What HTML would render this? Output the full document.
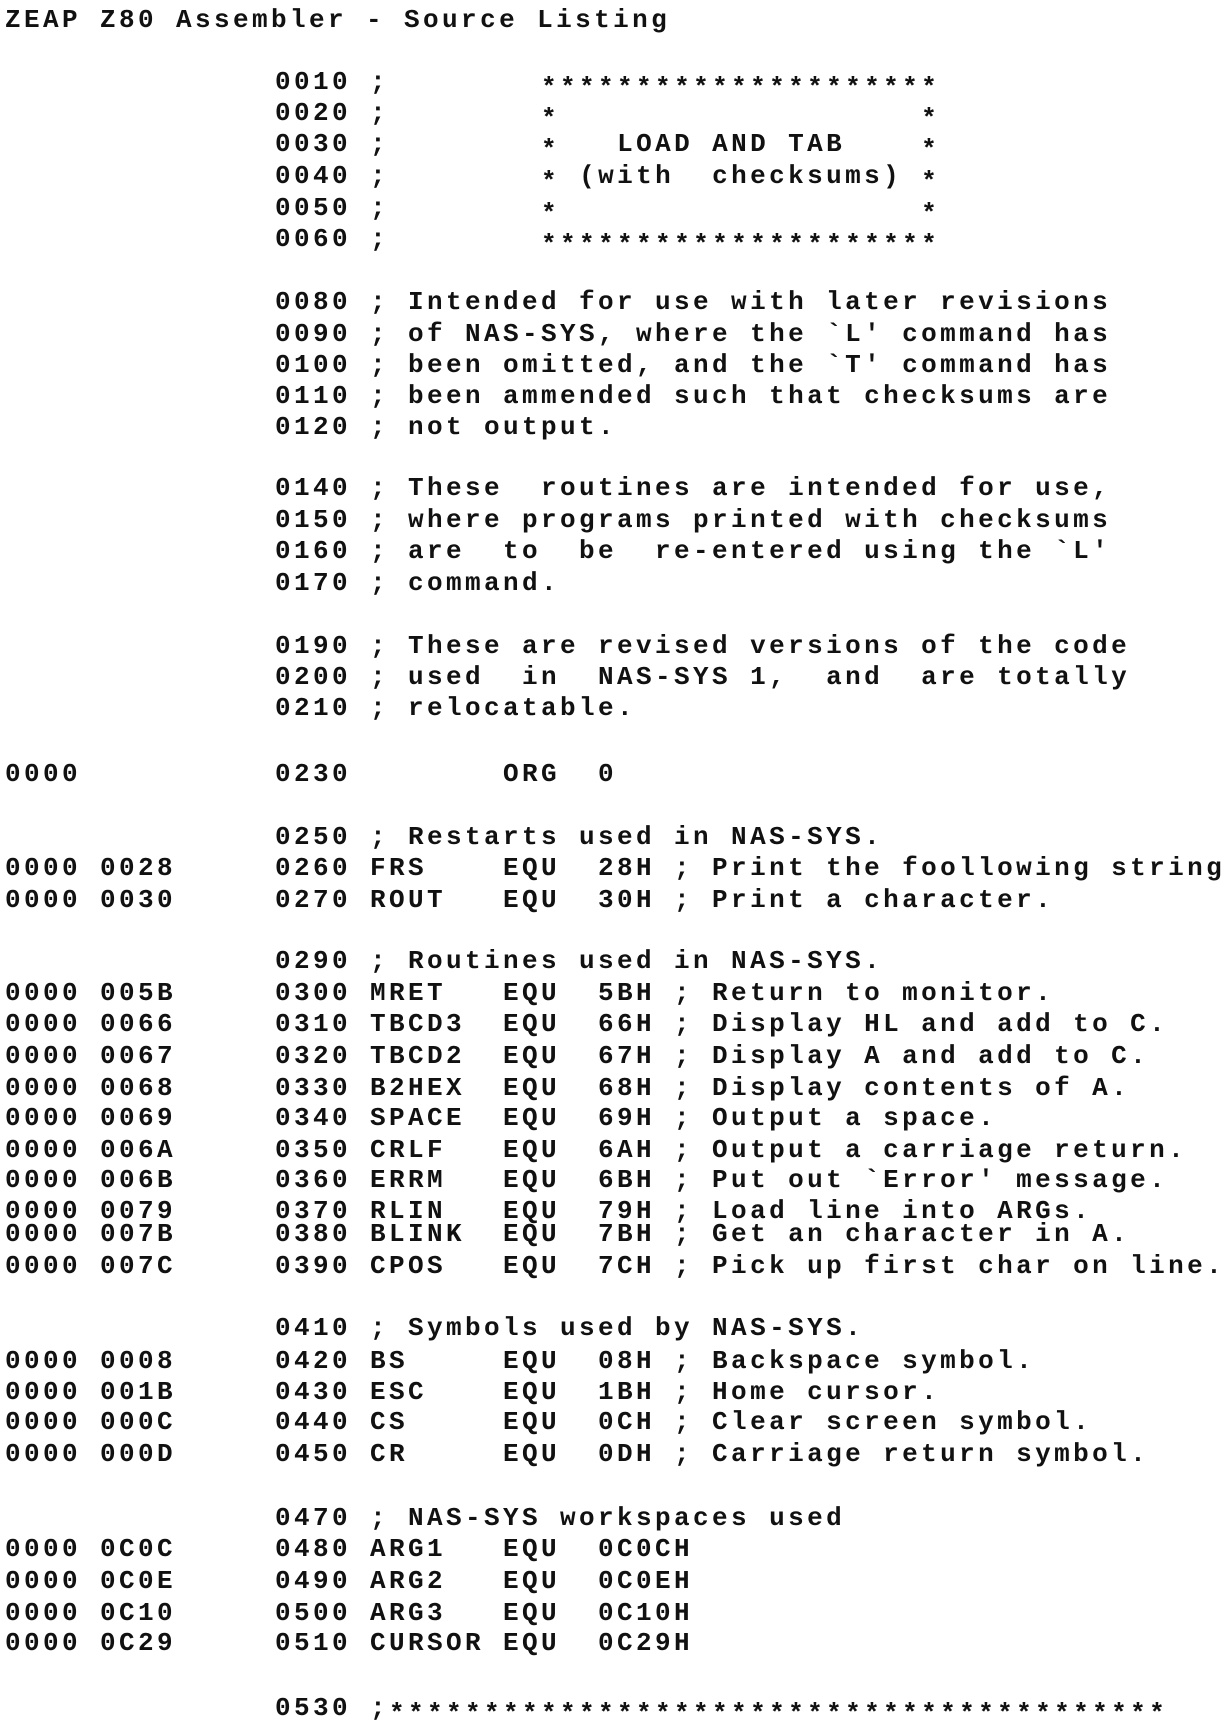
<!DOCTYPE html>
<html><head><meta charset="utf-8"><style>
html,body{margin:0;padding:0;background:#fff;}
body{width:1231px;height:1731px;position:relative;overflow:hidden;}
.l{position:absolute;white-space:pre;font-family:"Liberation Mono",monospace;font-size:26px;letter-spacing:3.4px;line-height:30px;color:#111;font-weight:bold;}
.a{left:5px}.m{left:275px}
.s{position:relative;top:6px}
</style></head><body>
<div class="l a" style="top:5px">ZEAP Z80 Assembler - Source Listing</div>
<div class="l m" style="top:67px">0010 ;        <span class="s">*********************</span></div>
<div class="l m" style="top:98px">0020 ;        <span class="s">*</span>                   <span class="s">*</span></div>
<div class="l m" style="top:129px">0030 ;        <span class="s">*</span>   LOAD AND TAB    <span class="s">*</span></div>
<div class="l m" style="top:161px">0040 ;        <span class="s">*</span> (with  checksums) <span class="s">*</span></div>
<div class="l m" style="top:193px">0050 ;        <span class="s">*</span>                   <span class="s">*</span></div>
<div class="l m" style="top:224px">0060 ;        <span class="s">*********************</span></div>
<div class="l m" style="top:287px">0080 ; Intended for use with later revisions</div>
<div class="l m" style="top:319px">0090 ; of NAS-SYS, where the `L' command has</div>
<div class="l m" style="top:350px">0100 ; been omitted, and the `T' command has</div>
<div class="l m" style="top:381px">0110 ; been ammended such that checksums are</div>
<div class="l m" style="top:412px">0120 ; not output.</div>
<div class="l m" style="top:473px">0140 ; These  routines are intended for use,</div>
<div class="l m" style="top:505px">0150 ; where programs printed with checksums</div>
<div class="l m" style="top:536px">0160 ; are  to  be  re-entered using the `L'</div>
<div class="l m" style="top:568px">0170 ; command.</div>
<div class="l m" style="top:631px">0190 ; These are revised versions of the code</div>
<div class="l m" style="top:662px">0200 ; used  in  NAS-SYS 1,  and  are totally</div>
<div class="l m" style="top:693px">0210 ; relocatable.</div>
<div class="l a" style="top:759px">0000</div>
<div class="l m" style="top:759px">0230        ORG  0</div>
<div class="l m" style="top:822px">0250 ; Restarts used in NAS-SYS.</div>
<div class="l a" style="top:853px">0000 0028</div>
<div class="l m" style="top:853px">0260 FRS    EQU  28H ; Print the foollowing string</div>
<div class="l a" style="top:885px">0000 0030</div>
<div class="l m" style="top:885px">0270 ROUT   EQU  30H ; Print a character.</div>
<div class="l m" style="top:946px">0290 ; Routines used in NAS-SYS.</div>
<div class="l a" style="top:978px">0000 005B</div>
<div class="l m" style="top:978px">0300 MRET   EQU  5BH ; Return to monitor.</div>
<div class="l a" style="top:1009px">0000 0066</div>
<div class="l m" style="top:1009px">0310 TBCD3  EQU  66H ; Display HL and add to C.</div>
<div class="l a" style="top:1041px">0000 0067</div>
<div class="l m" style="top:1041px">0320 TBCD2  EQU  67H ; Display A and add to C.</div>
<div class="l a" style="top:1073px">0000 0068</div>
<div class="l m" style="top:1073px">0330 B2HEX  EQU  68H ; Display contents of A.</div>
<div class="l a" style="top:1103px">0000 0069</div>
<div class="l m" style="top:1103px">0340 SPACE  EQU  69H ; Output a space.</div>
<div class="l a" style="top:1135px">0000 006A</div>
<div class="l m" style="top:1135px">0350 CRLF   EQU  6AH ; Output a carriage return.</div>
<div class="l a" style="top:1165px">0000 006B</div>
<div class="l m" style="top:1165px">0360 ERRM   EQU  6BH ; Put out `Error' message.</div>
<div class="l a" style="top:1196px">0000 0079</div>
<div class="l m" style="top:1196px">0370 RLIN   EQU  79H ; Load line into ARGs.</div>
<div class="l a" style="top:1219px">0000 007B</div>
<div class="l m" style="top:1219px">0380 BLINK  EQU  7BH ; Get an character in A.</div>
<div class="l a" style="top:1251px">0000 007C</div>
<div class="l m" style="top:1251px">0390 CPOS   EQU  7CH ; Pick up first char on line.</div>
<div class="l m" style="top:1313px">0410 ; Symbols used by NAS-SYS.</div>
<div class="l a" style="top:1346px">0000 0008</div>
<div class="l m" style="top:1346px">0420 BS     EQU  08H ; Backspace symbol.</div>
<div class="l a" style="top:1377px">0000 001B</div>
<div class="l m" style="top:1377px">0430 ESC    EQU  1BH ; Home cursor.</div>
<div class="l a" style="top:1407px">0000 000C</div>
<div class="l m" style="top:1407px">0440 CS     EQU  0CH ; Clear screen symbol.</div>
<div class="l a" style="top:1439px">0000 000D</div>
<div class="l m" style="top:1439px">0450 CR     EQU  0DH ; Carriage return symbol.</div>
<div class="l m" style="top:1503px">0470 ; NAS-SYS workspaces used</div>
<div class="l a" style="top:1534px">0000 0C0C</div>
<div class="l m" style="top:1534px">0480 ARG1   EQU  0C0CH</div>
<div class="l a" style="top:1566px">0000 0C0E</div>
<div class="l m" style="top:1566px">0490 ARG2   EQU  0C0EH</div>
<div class="l a" style="top:1598px">0000 0C10</div>
<div class="l m" style="top:1598px">0500 ARG3   EQU  0C10H</div>
<div class="l a" style="top:1628px">0000 0C29</div>
<div class="l m" style="top:1628px">0510 CURSOR EQU  0C29H</div>
<div class="l m" style="top:1693px">0530 ;<span class="s">*****************************************</span></div>
</body></html>
